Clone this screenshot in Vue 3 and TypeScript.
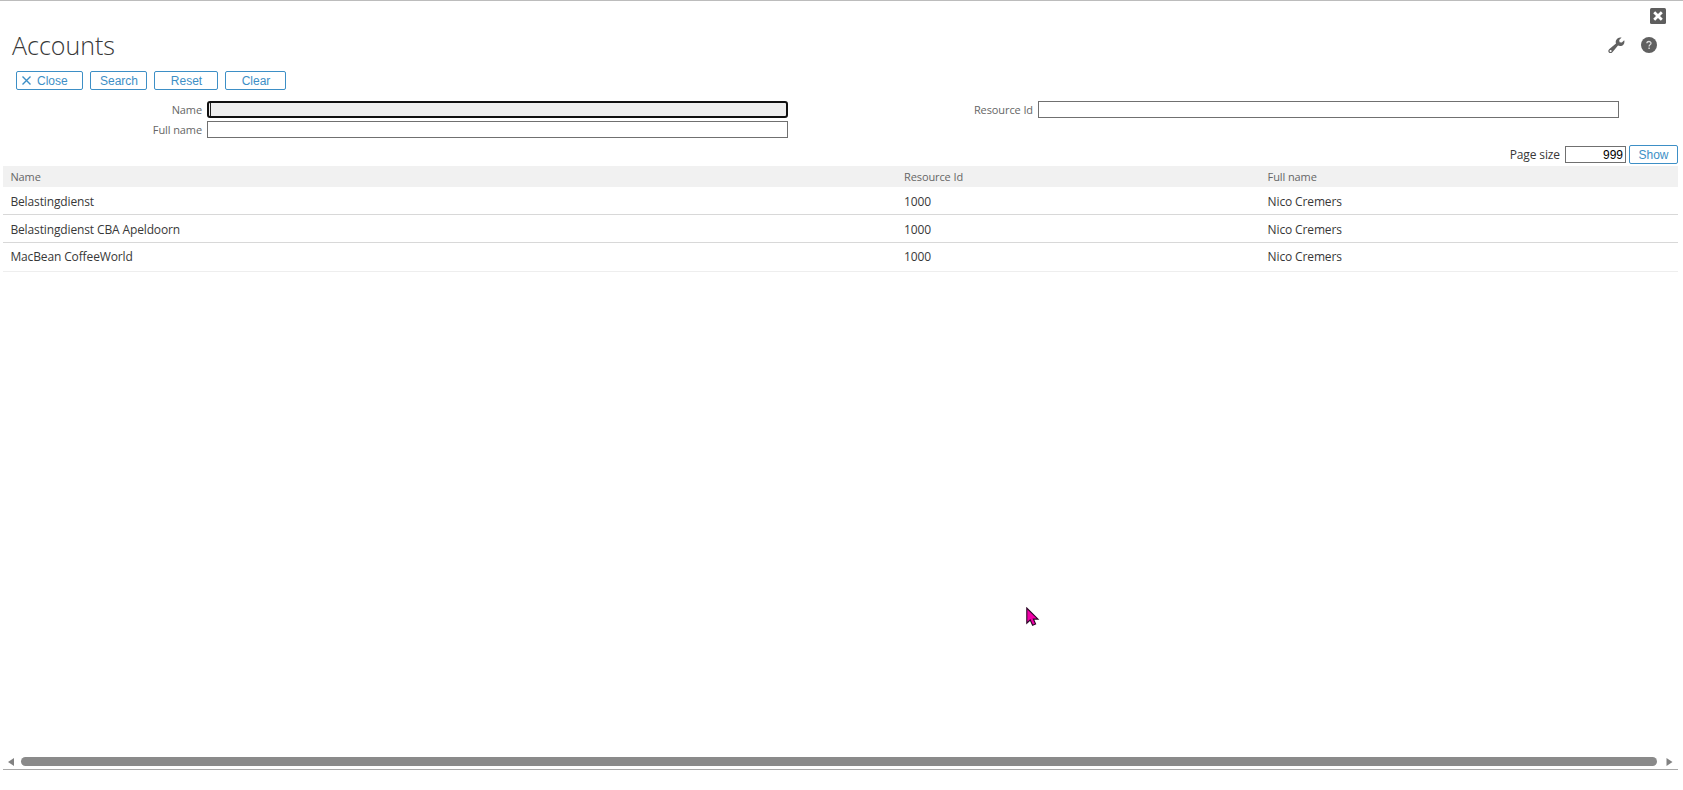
<script setup lang="ts">
import { ref } from 'vue'

interface Account {
  name: string
  resourceId: string
  fullName: string
}

const accounts: Account[] = [
  { name: 'Belastingdienst', resourceId: '1000', fullName: 'Nico Cremers' },
  { name: 'Belastingdienst CBA Apeldoorn', resourceId: '1000', fullName: 'Nico Cremers' },
  { name: 'MacBean CoffeeWorld', resourceId: '1000', fullName: 'Nico Cremers' },
]

const name = ref('')
const fullName = ref('')
const resourceId = ref('')
const pageSize = ref('999')
</script>

<template>
  <div class="window">
    <div class="titlebar">
      <svg class="win-close" width="16" height="16" viewBox="0 0 16 16">
        <rect width="16" height="16" rx="1.5" fill="#5e5e5e" />
        <path d="M4.2 4.2 11.8 11.8M11.8 4.2 4.2 11.8" stroke="#fff" stroke-width="2.8" />
      </svg>
    </div>

    <header class="heading">
      <h1>Accounts</h1>
      <div class="tools">
        <svg width="17" height="17" viewBox="0 0 17 17">
          <path
            fill="#606060"
            fill-rule="evenodd"
            d="M13.6 0.6 11.2 3.1 11.6 5.2 13.8 5.6 16.2 3.2C17 5.6 15.7 8.3 13.2 8.9 12 9.2 10.9 9 10 8.6L4.6 14.9C3.5 16.2 1.9 16.5.9 15.5-.1 14.5.2 12.9 1.4 11.9L8 6.6C7.6 5.5 7.6 4.4 8.1 3.3 9 1.1 11.3-.1 13.6.6ZM2.6 12.9A1.05 1.05 0 1 0 2.6 15 1.05 1.05 0 1 0 2.6 12.9Z"
          />
        </svg>
        <svg width="16" height="16" viewBox="0 0 16 16">
          <circle cx="8" cy="8" r="8" fill="#606060" />
          <path
            d="M5.9 6.3C5.9 3.9 10 3.9 10 6.2 10 7.6 8.1 7.7 8.1 9.4"
            fill="none"
            stroke="#ddd"
            stroke-width="1.3"
          />
          <rect x="7.4" y="10.5" width="1.4" height="1.5" fill="#ddd" />
        </svg>
      </div>
    </header>

    <div class="actions">
      <button class="btn close">
        <svg width="9" height="9" viewBox="0 0 9 9">
          <path d="M.5.5 8.5 8.5M8.5.5.5 8.5" stroke="#3d8fc6" stroke-width="1.4" />
        </svg>
        Close
      </button>
      <button class="btn search">Search</button>
      <button class="btn reset">Reset</button>
      <button class="btn clear">Clear</button>
    </div>

    <form class="filters" @submit.prevent>
      <label for="name">Name</label>
      <div class="field focused">
        <input id="name" v-model="name" type="text" />
      </div>
      <label for="resource">Resource Id</label>
      <div class="field"><input id="resource" v-model="resourceId" type="text" /></div>
      <label for="full">Full name</label>
      <div class="field"><input id="full" v-model="fullName" type="text" /></div>
    </form>

    <div class="paging">
      <label for="size">Page size</label>
      <div class="field size"><input id="size" v-model="pageSize" type="text" /></div>
      <button class="btn show">Show</button>
    </div>

    <main class="results">
      <div class="row head">
        <span>Name</span><span>Resource Id</span><span>Full name</span>
      </div>
      <div v-for="a in accounts" :key="a.name" class="row">
        <span>{{ a.name }}</span><span>{{ a.resourceId }}</span><span>{{ a.fullName }}</span>
      </div>
    </main>

    <footer class="scroller">
      <svg width="7" height="8" viewBox="0 0 7 8"><path d="M0 4 6 0V8Z" fill="#828282" /></svg>
      <div class="thumb"></div>
      <svg width="7" height="8" viewBox="0 0 7 8"><path d="M6.5 4 .5 0V8Z" fill="#828282" /></svg>
    </footer>

    <svg class="pointer" width="14" height="20" viewBox="0 0 14 20">
      <path
        d="M.8 1V16.2L4.2 13 6.6 18.3 9.6 17 7.4 12.1H12Z"
        fill="#f000a8"
        stroke="#2a0826"
        stroke-width="1.1"
      />
    </svg>
  </div>
</template>

<style>
body {
  margin: 0;
  background: #fff;
}
</style>

<style scoped>
* {
  box-sizing: border-box;
}
.window {
  position: relative;
  display: flex;
  flex-direction: column;
  height: 790px;
  overflow: hidden;
  border-top: 1px solid #bcbcbc;
  background: #fff;
  font-family: 'Open Sans', 'Noto Sans', sans-serif;
  color: #383838;
}
svg {
  display: block;
  flex: none;
}
.titlebar {
  display: flex;
  justify-content: flex-end;
  height: 27px;
  padding: 7px 17px 0 0;
}
.heading {
  display: flex;
  justify-content: space-between;
  height: 42px;
  padding: 0 26px 0 12px;
}
h1 {
  margin: 0;
  font-size: 25px;
  font-weight: 300;
  line-height: 35px;
  color: #383838;
}
.tools {
  display: flex;
  gap: 16px;
  padding-top: 9px;
}
.actions {
  display: flex;
  gap: 7px;
  height: 31px;
  padding: 1px 0 0 16px;
}
.btn {
  display: flex;
  align-items: center;
  justify-content: center;
  height: 19px;
  margin: 0;
  padding: 0;
  border: 1px solid #3d8fc6;
  border-radius: 2px;
  background: #fff;
  color: #3d8fc6;
  font: 12px 'Liberation Sans', Arial, sans-serif;
}
.close {
  justify-content: flex-start;
  gap: 6px;
  width: 67px;
  padding-left: 5px;
}
.search {
  width: 57px;
  padding-left: 1px;
}
.reset {
  width: 64px;
  padding-left: 1px;
}
.clear {
  width: 61px;
  padding-left: 1px;
}
.filters {
  display: grid;
  grid-template-columns: 202px 581px 245px 581px;
  grid-template-rows: 17px 17px;
  row-gap: 3px;
  height: 44px;
}
.filters label {
  font-size: 11px;
  letter-spacing: -0.1px;
  line-height: 17px;
  text-align: right;
  color: #666;
}
.filters .field {
  margin: 0 -5px 0 5px;
}
.filters label:nth-of-type(2) {
  margin-right: -5px;
}
.filters label:nth-of-type(2) + .field {
  margin: 0 -10px 0 10px;
}
.field {
  display: flex;
  height: 17px;
  border: 1px solid #707070;
  background: #fff;
}
.field input {
  width: 100%;
  height: 100%;
  min-width: 0;
  padding: 0 2px;
  border: 0;
  outline: 0;
  background: transparent;
  color: #000;
  font: 12px 'Liberation Sans', Arial, sans-serif;
}
.focused {
  border: 2px solid #101010;
  border-radius: 3px;
  background: #eee;
}
.focused::before {
  content: '';
  width: 1px;
  margin-left: 1px;
  background: #222;
}
.paging {
  display: flex;
  align-items: center;
  justify-content: flex-end;
  height: 19px;
  padding-right: 5px;
  font-size: 12px;
  letter-spacing: -0.12px;
}
.size {
  width: 61px;
  margin: 0 3px 0 5px;
}
.size input {
  text-align: right;
}
.show {
  width: 49px;
}
.results {
  flex: 1;
  margin: 2px 5px 0 3px;
}
.row {
  display: grid;
  grid-template-columns: 893.6px 363.6px 1fr;
  height: 28px;
  padding-left: 7.4px;
  border-bottom: 1px solid #d8d8d8;
  font-size: 12px;
  letter-spacing: -0.13px;
  line-height: 29px;
}
.row.head {
  height: 21px;
  border: 0;
  background: #f1f1f1;
  color: #666;
  font-size: 11px;
  letter-spacing: -0.1px;
  line-height: 22px;
}
.row:last-child {
  height: 29px;
  line-height: 28px;
  border-color: #eee;
}
.scroller {
  display: flex;
  align-items: center;
  gap: 6px;
  height: 14px;
  margin: 0 5px 20px 3px;
  padding: 0 5px 2px;
  border-bottom: 1px solid #a8a8a8;
}
.thumb {
  flex: 1;
  height: 9px;
  margin-right: 3px;
  border-radius: 5px;
  background: #8a8a8a;
}
.pointer {
  position: absolute;
  left: 1026px;
  top: 606px;
}
</style>
